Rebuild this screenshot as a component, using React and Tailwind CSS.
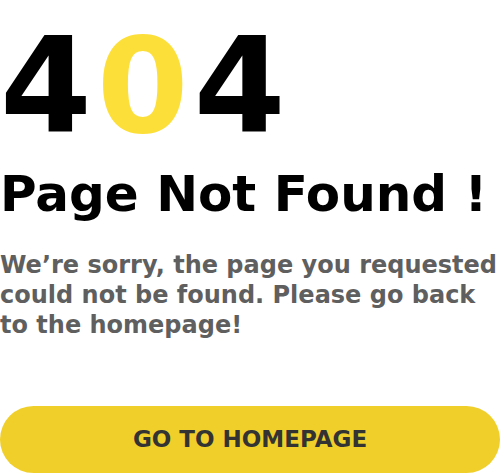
export default function App() {
  return (
    <div className="w-[500px] h-[474px] bg-white overflow-hidden font-['DejaVu_Sans',sans-serif]">
      <div className="pt-[20px]">
        <h1 className="text-[132px] leading-none font-bold tracking-[5px] text-black">
          4<span className="text-[#fddf3a]">0</span>4
        </h1>
        <h2 className="mt-[17px] text-[50px] leading-none font-bold text-black">Page Not Found !</h2>
        <p className="mt-[31px] text-[24px] leading-[30px] font-semibold text-[#5f5f5f]">
          We’re sorry, the page you requested could not be found. Please go back to the homepage!
        </p>
        <button className="mt-[66px] w-full h-[67px] rounded-full bg-[#f0cf2a] text-[23px] font-bold text-[#333333]">
          GO TO HOMEPAGE
        </button>
      </div>
    </div>
  );
}
